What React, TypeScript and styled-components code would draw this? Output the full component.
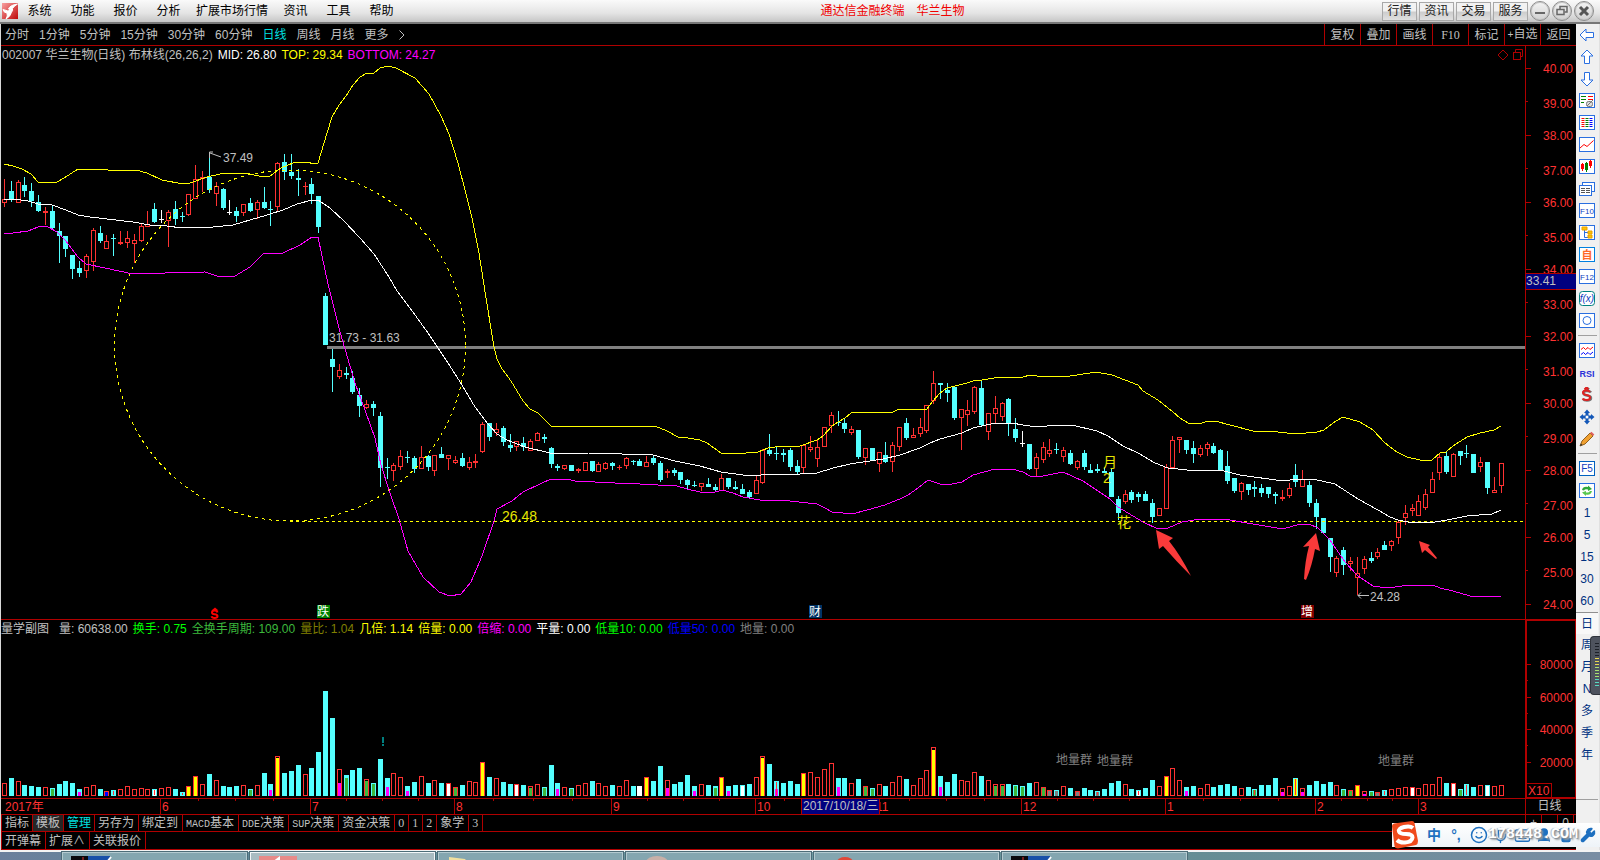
import React from 'react';
import styled, { createGlobalStyle, css } from 'styled-components';
import { Smile, Mic, Keyboard, UserRound, Shirt, Wrench } from 'lucide-react';

const RED_LINE = '#b00000';
const UP = '#ff3232';
const DOWN = '#54ffff';
const YELLOW = '#ffff00';
const MAGENTA = '#ff00ff';
const GREY = '#c0c0c0';

const GlobalStyle = createGlobalStyle`
  * { box-sizing: border-box; }
  html, body { margin: 0; padding: 0; background: #000; }
  body, button {
    font-family: "Liberation Sans", "Noto Sans CJK SC", sans-serif;
    font-size: 12px;
    line-height: 16px;
  }
  button { margin: 0; padding: 0; border: 0; background: none; color: inherit; white-space: nowrap; cursor: pointer; }
  svg { display: block; }
`;

/* ---------- data ---------- */

type Kind = 'u' | 'd' | 'w';

/* kind, high, body top, body bottom, low */
const CANDLE_DATA = `
u 179 199 203 207,d 181 191 200 202,u 180 182 203 203,d 177 185 191 197,d 183 191 201 207,d 195 202 211 212,
u 207 211 213 225,d 206 211 228 229,d 223 231 236 263,d 236 236 249 257,d 255 255 269 279,d 261 268 273 277,
u 254 256 271 278,u 228 230 262 271,d 226 233 241 243,u 235 241 249 249,d 234 238 239 256,u 231 242 244 245,
u 231 238 243 248,u 234 240 244 263,u 224 226 241 242,u 211 224 227 227,d 203 209 222 223,w 210 219 220 223,
u 210 212 221 247,d 201 209 219 225,d 212 216 217 222,u 194 194 215 216,u 165 179 199 199,u 171 177 179 192,
d 152 177 190 193,u 182 186 194 206,d 188 189 208 210,w 200 212 213 215,d 207 211 216 222,u 204 204 213 216,
d 198 203 211 212,u 200 202 210 219,d 187 202 208 209,d 201 209 210 226,u 162 163 207 211,d 154 162 172 180,
d 154 172 176 179,d 169 178 180 196,u 182 186 187 195,d 178 184 194 204,d 196 196 227 233,d 293 296 345 345,
d 349 359 367 392,u 364 370 377 379,d 367 373 375 379,d 371 378 392 394,d 388 395 406 417,u 400 404 408 409,
d 401 404 408 416,d 412 416 468 487,d 458 467 468 479,u 463 465 471 481,u 450 456 467 470,d 451 457 458 463,
d 456 458 469 473,u 446 457 469 469,d 455 456 467 471,u 455 455 471 476,d 447 454 458 458,u 455 455 459 470,
u 456 460 463 464,d 453 458 466 467,u 457 462 468 470,u 454 461 463 468,u 422 424 452 453,d 423 423 437 441,
u 423 429 433 436,d 426 428 442 446,d 434 445 448 452,u 441 441 447 451,d 437 443 447 451,u 439 441 451 451,
u 432 433 441 441,d 434 437 439 443,d 447 448 464 468,d 464 466 468 471,u 465 465 469 470,d 465 465 471 471,
u 468 469 471 473,u 462 462 471 471,d 461 461 471 472,u 462 464 472 472,u 462 463 469 470,d 462 463 466 470,
u 465 467 468 470,u 457 458 466 469,d 460 461 462 465,d 459 461 466 466,u 456 462 467 467,d 456 458 463 465,
d 461 463 480 482,u 469 471 473 478,d 468 470 473 476,d 472 472 480 484,d 479 480 485 489,d 481 485 486 487,
u 483 483 487 491,d 478 484 487 487,d 484 487 490 491,u 474 478 491 491,d 478 478 487 489,d 481 487 489 490,
d 484 489 494 494,d 490 492 497 498,u 475 480 494 494,u 449 450 483 484,d 434 450 454 456,d 446 453 454 460,
d 449 453 455 462,d 448 450 467 471,d 460 466 472 474,u 445 445 468 473,u 436 447 450 452,u 440 447 459 467,
u 427 427 447 447,u 412 415 426 433,d 411 422 423 426,d 418 423 429 433,u 426 429 433 435,d 430 430 457 459,
u 448 448 458 465,d 448 448 460 460,u 452 452 464 472,d 442 455 462 463,u 442 445 462 472,u 427 427 447 451,
d 418 423 438 440,u 428 435 438 438,u 418 427 434 437,u 405 405 431 433,u 371 383 401 404,d 383 383 385 399,
d 383 390 393 402,d 386 387 418 420,u 409 409 418 450,u 400 410 415 426,u 386 387 412 414,d 381 388 425 426,
u 413 413 432 440,u 396 408 414 423,u 402 403 417 421,d 398 399 423 436,d 418 429 438 442,w 431 443 444 447,
d 444 444 469 470,u 453 457 469 476,u 442 447 460 463,u 439 450 454 457,d 443 449 450 454,u 447 450 457 462,
d 450 453 464 465,u 460 461 468 470,d 450 453 467 470,d 464 470 473 473,d 464 469 471 473,d 467 471 473 473,
d 469 472 497 497,d 496 499 513 520,u 490 494 502 504,d 490 492 500 503,d 492 494 497 502,d 491 494 501 501,
d 499 503 517 523,u 508 508 516 516,u 464 467 509 509,u 436 440 468 468,u 437 437 440 453,d 440 440 450 454,
d 441 448 454 463,u 445 448 455 457,u 442 444 449 456,d 443 446 453 454,d 449 450 470 470,d 451 466 481 484,
d 478 478 491 493,u 482 483 492 500,d 484 484 490 495,d 481 487 489 497,d 484 488 493 497,d 487 487 494 498,
d 492 494 496 504,u 490 497 499 501,u 483 488 496 498,d 464 475 482 487,u 470 479 487 487,d 481 485 503 507,
d 499 503 517 529,d 518 518 533 533,d 538 538 557 572,u 556 558 573 577,d 547 550 565 575,u 557 561 564 571,
u 557 573 578 595,u 556 559 569 574,d 552 558 561 563,u 548 552 557 559,d 541 545 550 550,u 540 541 546 551,
u 520 522 538 544,u 505 513 518 525,u 504 508 511 516,u 495 501 516 516,u 489 494 508 510,u 472 479 493 493,
u 454 457 473 480,d 451 456 472 474,u 453 454 477 477,d 451 451 456 465,d 445 453 454 458,d 454 454 473 473,
u 457 462 467 472,d 462 462 488 494,u 477 490 493 493,u 463 463 486 493`;

/* kind, bar height, optional inner colour and its height, optional red core */
const VOLUME_DATA = `
u13 d18 u15 d11 d10 d9 u9 d8g7 d12 d15 d13 d7m4 u9 u11 d7 u5b4 d6r u7 u10 u7 u8 u7 d7w6r u8 u9 d7 d4r u10y9 u20y19
u12 d22 u16 d10 d9 d10 u11 d7g6 u11 d23 d12m6 u40y38 d23 d25 d31 u22 d28 d44 d105 d78 u27m13 d21g18 d26 d28 u17g15
d13g12 d37 d18m9 u23 u19 d10m5 d14 u20 d13 u16 d13 u13w12 u9g8 d11 u15 u14 u34y33 d19 u18 d14 d12 u12w11 d11 u10g8
u12 d9g8 d31 d13m7 u9 d8g7 u11 u13 d15 u13 u10 d11 u10 u16 d10 w10 u19y18 d15 d30 u16m8 d12 d14 d21 d10m5 u12 d11
d10g8 u19y18 d10m5 d11 d11w10 d12 u19 u40y38 d32 d15m7r d13 d15 d12 u23y22 u24 u19 u27 u33 d18m9 d18 u13 d17 u10g9
d8g7 u12 d10 u14 u20 d17 u11 u18 u26 u49y46 d20m9 d14 d22 u16 u15 u24 d20 u16 u12g10 u12g10 d12 d11g10 d10g9 d13
u14 u9g8 u6k5 d6k5 u10 d8 u5k4 d8 d6 d5k4r d7 d13 d15 u12 d7 d6w5r d8 d16 u10 u20y19 u28 u16 d9m5 d10 u8 u12 d9
d11 d12 d10 u8 d9 d7g6r d11 d11 d18 u8m4 u10 d18y17r u8m4 d11 d15 d12 d14 u11 d7g6 u6g5 u11y10 u5m2 d5g4 u4k3
d6r u7 u8 u9 u9w8 u8 u12 u12 u19 d13 u13w12 d7g6 d12r d9 u11 d11w10 u10 u11`;

const FILLS: Record<string, string> = {
  y: YELLOW, m: MAGENTA, g: '#3cb83c', w: '#ffffff', b: '#0000ff', k: '#808080',
};

const TOP_LINE =
  '4,164 13,166 22,169 31,174 38,182 57,182 64,178 78,169 105,169 108,170 136,170 147,173 162,180 183,184 190,183 207,177 220,174 245,173 259,176 270,176 281,168 293,163 309,162 312,164 318,163 324,143 332,117 339,105 346,96 353,85 360,77 367,73 374,73 380,68 388,66 396,68 415,78 429,94 441,116 449,134 458,163 465,190 472,218 479,253 486,298 494,347 497,359 502,369 511,381 523,401 530,409 538,413 551,426 655,426 667,431 678,437 688,438 700,440 707,443 721,453 746,453 758,452 768,448 782,446 800,446 817,440 823,436 832,426 838,422 845,418 851,413 863,412 893,412 899,409 915,409 920,410 927,409 932,402 940,393 947,388 955,386 967,383 973,381 982,380 1000,377 1023,377 1030,375 1037,376 1063,377 1077,375 1096,372 1112,375 1138,385 1143,391 1158,400 1173,412 1180,418 1188,423 1202,423 1208,421 1215,421 1230,425 1253,431 1278,432 1295,434 1317,432 1324,430 1333,423 1343,417 1360,422 1373,430 1385,443 1397,452 1407,457 1420,460 1432,460 1440,453 1446,452 1453,446 1467,437 1480,433 1494,430 1501,426';
const MID_LINE =
  '4,199 13,199 28,201 38,204 52,205 66,210 78,215 90,217 107,219 133,222 150,225 167,226 182,228 213,227 233,225 250,220 267,215 283,210 297,204 312,200 318,200 330,208 344,221 360,238 374,254 389,277 397,291 410,308 428,333 448,363 462,385 475,407 488,424 497,434 507,440 525,447 550,453 588,453 622,454 653,455 675,461 700,466 721,472 743,475 755,476 767,474 800,474 817,473 833,468 850,464 863,462 883,459 900,455 920,448 930,443 940,439 962,433 973,428 995,423 1012,423 1023,425 1030,426 1047,426 1050,425 1072,425 1097,431 1108,436 1123,446 1138,453 1155,463 1168,468 1197,471 1220,470 1240,475 1283,481 1297,479 1313,479 1335,484 1358,499 1378,510 1390,517 1398,520 1408,522 1435,522 1447,520 1467,516 1492,514 1501,510';
const BOTTOM_LINE =
  '4,233 13,233 28,231 38,227 40,226 48,227 57,232 66,241 78,257 86,264 105,268 133,274 165,273 205,272 217,276 235,276 245,270 250,267 263,254 283,253 300,245 312,237 318,237 328,284 340,332 355,383 365,410 375,438 381,465 390,493 399,519 408,551 423,577 439,592 450,596 461,594 471,582 482,556 494,521 497,509 512,501 523,492 542,483 551,479 567,479 575,481 615,483 640,484 658,485 677,486 687,489 700,492 712,493 722,490 733,493 743,497 760,500 790,501 817,504 825,508 832,512 843,513 852,514 867,510 885,505 892,502 900,499 908,495 918,488 928,480 940,484 952,484 962,482 973,475 995,469 1012,469 1023,472 1030,476 1043,476 1063,472 1083,481 1110,499 1118,507 1143,522 1158,529 1168,528 1182,522 1200,519 1230,520 1253,524 1283,529 1300,524 1309,524 1318,528 1330,540 1345,562 1358,576 1373,586 1380,587 1395,587 1410,585 1433,585 1440,588 1453,591 1470,596 1501,596';

const barX = (i: number) => Math.floor(4.36 + 6.834 * i);

const candles = CANDLE_DATA.trim().split(',').map((row, i) => {
  const [kind, ...nums] = row.trim().split(' ');
  const [high, top, bottom, low] = nums.map(Number);
  return { kind: kind as Kind, high, top, bottom, low, x: barX(i) };
});

const volumes = VOLUME_DATA.trim().split(/\s+/).map((token, i) => {
  const m = /^([udw])(\d+)(?:([ymgwbk])(\d+))?(r)?$/.exec(token)!;
  return { kind: m[1] as Kind, height: Number(m[2]), fill: m[3], fillHeight: Number(m[4] || 0), core: !!m[5], x: barX(i) };
});

/* ---------- frame ---------- */

const Page = styled.div`
  position: relative;
  display: flex;
  flex-direction: column;
  min-height: 100vh;
  overflow: hidden;
  background: #000;
`;

const MenuBar = styled.header`
  display: flex;
  align-items: center;
  height: 24px;
  padding: 0 6px 0 2px;
  border-bottom: 2px solid #777;
  background: linear-gradient(#fafafa, #e4e4e4 60%, #c6c6c6);
`;

const MenuItems = styled.nav`
  display: flex;
`;

const MenuItem = styled.button`
  min-width: 43px;
  padding: 0 6px;
  color: #000;
`;

const Title = styled.h1`
  display: flex;
  flex: 1;
  gap: 12px;
  justify-content: center;
  margin: 0;
  color: #f00000;
  font-size: 12px;
  font-weight: 400;
  white-space: nowrap;
`;

const TitleButtons = styled.div`
  display: flex;
  align-items: center;
  gap: 2px;
`;

const TitleButton = styled.button`
  width: 35px;
  height: 19px;
  border: 1px solid #a8a8a8;
  background: linear-gradient(#f2f2f2 45%, #cdcdcd 55%, #e0e0e0);
  color: #222;
`;

const WindowButton = styled.button`
  display: grid;
  place-items: center;
  width: 20px;
  height: 20px;
  border: 1px solid #8c8c8c;
  border-radius: 50%;
  background: linear-gradient(#f4f4f4, #d0d0d0);
  box-shadow: inset 0 0 0 1px #c4c4c4;
`;

const Body = styled.div`
  display: flex;
  border-bottom: 2px solid #f4f4f4;
`;

const Main = styled.main`
  flex: 1;
  min-width: 0;
  border-left: 1px solid #d8d8d8;
`;

const PeriodBar = styled.div`
  display: flex;
  justify-content: space-between;
  height: 22px;
  border-bottom: 1px solid ${RED_LINE};
  color: ${GREY};
`;

const Periods = styled.nav`
  display: flex;
  align-items: center;
  gap: 10px;
  padding-left: 4px;
`;

const Period = styled.button<{ $active?: boolean }>`
  color: ${(p) => (p.$active ? '#00e0e0' : GREY)};
`;

const Tools = styled.div`
  display: flex;
`;

const Tool = styled.button`
  width: 36px;
  border-left: 1px solid ${RED_LINE};
`;

const Mono = styled.span`
  font-family: "Liberation Mono", monospace;
  font-size: 10px;
`;

const Serif = styled.span`
  font-family: "Liberation Serif", serif;
`;

/* ---------- chart panes ---------- */

const Pane = styled.section`
  display: flex;
  border-bottom: 1px solid ${RED_LINE};
`;

const Plot = styled.div`
  flex: 1;
  min-width: 0;
`;

const Axis = styled.div<{ $framed?: boolean }>`
  width: 51px;
  border-left: 1px solid ${RED_LINE};
  ${(p) => p.$framed && css`
    box-shadow: inset 1px 0 ${RED_LINE}, inset -1px 0 ${RED_LINE}, inset 0 1px ${RED_LINE}, inset 0 -1px ${RED_LINE};
  `}
`;

const Legend = styled.div`
  display: flex;
  align-items: center;
  gap: 5px;
  height: 18px;
  padding: 0 1px;
  white-space: nowrap;
`;

const SubLegend = styled(Legend)`
  padding-left: 0;
`;

const LegendName = styled.span`
  margin-right: 5px;
  color: ${GREY};
`;

const Value = styled.span<{ $color: string }>`
  color: ${(p) => p.$color};
`;

const PaneIcons = styled.span`
  display: flex;
  gap: 3px;
  margin-left: auto;
`;

const Drawing = styled.svg`
  width: 100%;
  font-family: "Liberation Sans", "Noto Sans CJK SC", sans-serif;
  font-size: 12px;
`;

const AxisName = styled.div`
  width: 51px;
  padding-right: 3px;
  border-left: 1px solid ${RED_LINE};
  color: ${GREY};
  text-align: center;
  line-height: 15px;
`;

/* ---------- bottom tabs ---------- */

const TabRow = styled.div<{ $last?: boolean }>`
  display: flex;
  height: ${(p) => (p.$last ? 18 : 17)}px;
  border-bottom: 1px solid ${RED_LINE};
  border-left: 1px solid ${RED_LINE};
`;

const Tab = styled.button<{ $tight?: boolean; $pressed?: boolean; $active?: boolean }>`
  padding: ${(p) => (p.$tight ? '0 3px' : '0 4px 0 3px')};
  border-right: 1px solid ${RED_LINE};
  background: ${(p) => (p.$pressed ? '#262626' : 'none')};
  color: ${(p) => (p.$active ? '#00e0e0' : GREY)};
`;

const ZoomBox = styled.div`
  display: flex;
  width: 51px;
  margin-left: auto;
  border-left: 1px solid ${RED_LINE};
`;

const ZoomButton = styled.button`
  width: 16px;
  border-right: 1px solid ${RED_LINE};
  color: ${GREY};
`;

/* ---------- side bar ---------- */

const SideBar = styled.aside`
  display: flex;
  flex-direction: column;
  width: 24px;
  padding-right: 1px;
  background: #f0f0f0;
  border-right: 1px solid #e0e0e0;
`;

const SideButton = styled.button<{ $pressed?: boolean }>`
  display: grid;
  place-items: center;
  height: 22px;
  color: #003080;
  font-size: 12px;
  ${(p) => p.$pressed && css`
    border-top: 1px solid #909090;
    background: #f8f8f8;
  `}
`;

const SideRule = styled.hr`
  width: 19px;
  height: 8px;
  margin: 0 0 0 2px;
  border: 0;
  background: linear-gradient(#a0a0a0, #a0a0a0) 0 3px / 100% 1px no-repeat;
`;

const SideFoot = styled.div`
  margin-top: auto;
  height: 51px;
  border-top: 1px solid #a0a0a0;
`;

/* ---------- desktop overlays ---------- */

const Meter = styled.div`
  position: absolute;
  top: 636px;
  right: 0;
  width: 10px;
  height: 59px;
  padding: 6px 2px 0 4px;
  border: 1px solid #30343c;
  border-right: 0;
  border-radius: 4px 0 0 4px;
  background: #4e535e;
`;

const ImeBar = styled.div`
  position: absolute;
  top: 823px;
  right: 0;
  display: flex;
  align-items: center;
  gap: 6px;
  height: 24px;
  padding-right: 4px;
  background: linear-gradient(#fff, #eef3f8);
  color: #1e70c0;
`;

const ImeButton = styled.button`
  display: grid;
  place-items: center;
  width: 16px;
  height: 20px;
  font-size: 14px;
  font-weight: 700;
`;

const ImeLogo = styled.svg`
  margin-left: -2px;
`;

const Watermark = styled.span`
  position: absolute;
  right: 22px;
  top: 3px;
  color: #fff;
  font-family: "Liberation Mono", monospace;
  font-size: 15px;
  font-weight: 700;
  line-height: 18px;
  text-shadow: 1px 1px 1px #8a8f94, -1px 0 1px #b0b4b8, 2px 2px 2px #9aa0a4;
`;

const TaskBar = styled.footer`
  display: flex;
  flex: 1;
  gap: 3px;
  min-height: 8px;
  padding-left: 62px;
  background: linear-gradient(90deg, #6b7f9c, #5f8c98 20%, #6d9aa2 50%, #668d94 75%, #7a8ea4);
`;

const Task = styled.button<{ $active?: boolean }>`
  display: flex;
  width: 185px;
  min-width: 0;
  padding: 3px 8px 0;
  overflow: hidden;
  border: 1px solid ${(p) => (p.$active ? '#f2f6f8' : '#b4cad0')};
  border-bottom: 0;
  background: ${(p) => (p.$active ? '#a9bcc2' : '#84a6b0')};
  box-shadow: 0 0 0 1px #4c6c78;
`;

/* ---------- chart drawings ---------- */

function Candle({ c }: { c: (typeof candles)[number] }) {
  const color = c.kind === 'u' ? UP : c.kind === 'd' ? DOWN : '#ffffff';
  const h = Math.max(c.bottom - c.top, 1);
  const hollow = c.kind === 'u' && h > 2;
  return (
    <g fill={color}>
      {c.top > c.high && <rect x={c.x} y={c.high} width={1} height={c.top - c.high} />}
      {c.low > c.bottom && <rect x={c.x} y={c.bottom} width={1} height={c.low - c.bottom} />}
      {hollow ? (
        <rect x={c.x - 1.5} y={c.top + 0.5} width={4} height={h - 1} fill="none" stroke={color} />
      ) : (
        <rect x={c.x - 2} y={c.top} width={5} height={h} />
      )}
    </g>
  );
}

function VolumeBar({ v }: { v: (typeof volumes)[number] }) {
  const base = 796;
  const top = base - v.height;
  return (
    <g>
      {v.kind === 'u' ? (
        <rect x={v.x - 1.5} y={top + 0.5} width={4} height={v.height - 1} fill="none" stroke={UP} />
      ) : (
        <rect x={v.x - 2} y={top} width={5} height={v.height} fill={v.kind === 'w' ? '#fff' : DOWN} />
      )}
      {v.fill && <rect x={v.x - 1} y={base - v.fillHeight} width={3} height={v.fillHeight} fill={FILLS[v.fill]} />}
      {v.core && <rect x={v.x} y={top + 1} width={1} height={v.height - 2} fill={UP} />}
    </g>
  );
}

function Badge({ x, fill, children }: { x: number; fill: string; children: string }) {
  return (
    <g>
      <rect x={x} y={605} width={13} height={13} fill={fill} />
      <text x={x} y={616} fill="#fff">{children}</text>
    </g>
  );
}

function PricePlot() {
  return (
    <Drawing height={555} role="img" aria-label="华兰生物 日线">
      <g transform="translate(-1 -64)">
        <g shapeRendering="crispEdges">
          {candles.map((c) => <Candle key={c.x} c={c} />)}
          <rect x={327} y={346} width="100%" height={3} fill="#808080" />
          <line x1={290} y1={521.5} x2="100%" y2={521.5} stroke={YELLOW} strokeDasharray="3 3" />
          <g fill="none" strokeWidth={1}>
            <circle cx={290} cy={345.5} r={175.5} stroke={YELLOW} strokeDasharray="3 4" />
            <polyline points={TOP_LINE} stroke={YELLOW} />
            <polyline points={MID_LINE} stroke="#fff" />
            <polyline points={BOTTOM_LINE} stroke={MAGENTA} />
          </g>
        </g>
        <path d="M209.5 158 V152 H213 M210 153 L221 157" fill="none" stroke={GREY} />
        <path d="M1369 595.5 H1358 M1361 592.5 L1358 595.5 L1361 598.5" fill="none" stroke={GREY} />
        <g fill={GREY}>
          <text x={223} y={162}>37.49</text>
          <text x={329} y={342}>31.73 - 31.63</text>
          <text x={1370} y={601}>24.28</text>
        </g>
        <g fill="#e6e600" fontSize={14}>
          <text x={502} y={521}>26.48</text>
          <text x={1103} y={467}>月</text>
          <text x={1103} y={483}>2</text>
          <text x={1117} y={527}>花</text>
        </g>
        <g fill="#fa3a3a">
          <path d="M1156 530 L1173 538 L1169 541 Q1181 556 1191 576 Q1176 561 1163 546 L1159 549 Z" />
          <path d="M1316 533 L1320 551 L1315 549 Q1312 566 1306 580 L1304 579 Q1305 561 1309 546 L1303 547 Z" />
          <path d="M1419 541 L1430 545 L1428 547 L1437 558 L1436 559 L1425 550 L1422 553 Z" />
        </g>
        <Badge x={317} fill="#008000">跌</Badge>
        <Badge x={809} fill="#003366">财</Badge>
        <Badge x={1301} fill="#800000">增</Badge>
        <path d="M211.5 610.5 L215 607.5 L218.500 610.5 Z" fill="#f00" />
        <path d="M217.500 612.500 Q217 610.500 214.500 610.500 Q212 610.500 212 612.500 Q212 614 214.500 614.300 Q217.500 614.600 217.500 616.300 Q217.500 618 214.500 618 Q212 618 211.500 616.300" fill="none" stroke="#f00" strokeWidth={2} />
      </g>
    </Drawing>
  );
}

function VolumePlot() {
  return (
    <Drawing height={160} role="img" aria-label="量学副图">
      <g transform="translate(-1 -638)">
        <g shapeRendering="crispEdges">
          {volumes.map((v) => <VolumeBar key={v.x} v={v} />)}
          <path d="M383 737 V743 M383 744 V746" stroke="#008080" strokeWidth={2} />
        </g>
        <g fill="#808080">
          <text x={1056} y={764}>地量群</text>
          <text x={1097} y={765}>地量群</text>
          <text x={1378} y={765}>地量群</text>
        </g>
      </g>
    </Drawing>
  );
}

const prices = Array.from({ length: 17 }, (_, i) => 40 - i);

function PriceScale() {
  return (
    <Drawing height={573} fill={UP}>
      {prices.map((p, i) => {
        const y = 22 + Math.floor(33.5 * i);
        return (
          <g key={p}>
            <rect x={0} y={y} width={i % 2 ? 2 : 5} height={1} fill={RED_LINE} />
            <text x={47} y={y + (i % 2 ? 7 : 5)} textAnchor="end">{p.toFixed(2)}</text>
          </g>
        );
      })}
      <rect x={0} y={227} width={50} height={17} fill={RED_LINE} />
      <rect x={0} y={228} width={50} height={15} fill="#000080" />
      <text x={0} y={239} fill={GREY}>33.41</text>
    </Drawing>
  );
}

function VolumeScale() {
  return (
    <Drawing height={178} fill={UP}>
      {[80000, 60000, 40000, 20000].map((n, i) => {
        const y = 44 + Math.round(32.7 * i);
        return (
          <g key={n}>
            <rect x={0} y={y} width={5} height={1} fill={RED_LINE} />
            {i < 3 && <rect x={0} y={y + 16} width={2} height={1} fill={RED_LINE} />}
            <text x={47} y={y + 5} textAnchor="end">{n}</text>
          </g>
        );
      })}
      <rect x={0.5} y={163.500} width={25} height={14} fill="none" stroke={RED_LINE} />
      <text x={2} y={175}>X10</text>
    </Drawing>
  );
}

const months: [number, string][] = [
  [160, '6'], [310, '7'], [454, '8'], [611, '9'], [755, '10'], [874, '11'], [1021, '12'], [1165, '1'], [1315, '2'], [1418, '3'],
];
const weeks = [198, 235, 273, 346, 382, 418, 493, 533, 572, 647, 683, 719, 784, 909, 946, 984, 1057, 1093, 1129, 1203, 1240, 1278, 1341, 1367, 1392];

function TimeScale() {
  return (
    <Drawing height={15} fill={UP}>
      <text x={4} y={12}>2017年</text>
      {weeks.map((x) => <rect key={x} x={x - 1} y={0} width={1} height={2} fill={RED_LINE} />)}
      {months.map(([x, label]) => (
        <g key={x}>
          <rect x={x - 1} y={0} width={1} height={15} fill={RED_LINE} />
          <text x={x + 1} y={12}>{label}</text>
        </g>
      ))}
      <rect x={800} y={0} width={79} height={15} fill={RED_LINE} />
      <rect x={801} y={0} width={77} height={15} fill="#000080" />
      <text x={802} y={11} fill={GREY}>2017/10/18/三</text>
    </Drawing>
  );
}

/* ---------- icons ---------- */

const BLUE = '#2a6fe0';

function Framed({ stroke = BLUE, children }: { stroke?: string; children?: React.ReactNode }) {
  return (
    <svg width={16} height={16}>
      <rect x={0.5} y={0.5} width={15} height={14} fill="#fff" stroke={stroke} />
      {children}
    </svg>
  );
}

const ArrowIcon = ({ turn }: { turn: number }) => (
  <svg width={16} height={16}>
    <path transform={`rotate(${turn} 8 8)`} d="M1 8 L7 2 V5.500 H14.500 V10.500 H7 V14 Z" fill="#fff" stroke={BLUE} />
  </svg>
);

const FLabel = ({ text, stroke }: { text: string; stroke?: string }) => (
  <Framed stroke={stroke}>
    <text x={8} y={11} textAnchor="middle" fontSize={text.length > 2 ? 8 : 10} fill="#1040c0">{text}</text>
  </Framed>
);

const sideIcons: [string, React.ReactNode][] = [
  ['后退', <ArrowIcon turn={0} />],
  ['上翻', <ArrowIcon turn={90} />],
  ['下翻', <ArrowIcon turn={270} />],
  ['报价', (
    <Framed>
      <path d="M2 3.500 H7 M2 6.500 H7 M2 9.500 H5" stroke="#008000" />
      <path d="M9 3.500 H14 M9 6.500 H14" stroke="#f00" />
      <rect x={7.500} y={8.500} width={6} height={5} rx={2} fill="#ddd" stroke="#777" />
      <path d="M8 13 L14 7" stroke="#777" />
    </Framed>
  )],
  ['行情', (
    <Framed>
      <path d="M4 3 V13" stroke="#f00" strokeWidth={3} strokeDasharray="1 1" />
      <path d="M8 3 V13" stroke="#008000" strokeWidth={3} strokeDasharray="1 1" />
      <path d="M12 3 V13" stroke="#00f" strokeWidth={3} strokeDasharray="1 1" />
    </Framed>
  )],
  ['分时图', <Framed><path d="M1 11 L5 7.500 L8 9.500 L14.500 3.500" fill="none" stroke="#f00" /></Framed>],
  ['K线图', (
    <Framed>
      <path d="M3.500 4 V12 M11.500 1 V9" stroke="#f00" />
      <path d="M7.500 3 V13" stroke="#008000" />
      <path d="M2 5 H5 V10 H2 Z M10 2 H13 V7 H10 Z" fill="#f00" />
      <path d="M6 4 H9 V11 H6 Z" fill="#008000" />
    </Framed>
  )],
  ['多窗', (
    <svg width={16} height={16}>
      <rect x={3.500} y={1.500} width={12} height={9} fill="#fff" stroke={BLUE} />
      <rect x={0.500} y={4.500} width={12} height={10} fill="#fff" stroke={BLUE} />
      <path d="M2 7.500 H6 M7 7.500 H11 M2 9.500 H6 M7 9.500 H11 M2 11.500 H6 M7 11.500 H11" stroke="#555" />
    </svg>
  )],
  ['F10', <FLabel text="F10" />],
  ['结构', (
    <Framed>
      <path d="M5.500 4 V12.500 H9 M5.500 7.500 H9" fill="none" stroke={BLUE} />
      <path d="M3 2 H8 V5 H3 Z M9 6 H13 V9 H9 Z M9 10 H13 V13 H9 Z" fill="#ffc400" stroke="#e8a000" />
    </Framed>
  )],
  ['自选', (
    <Framed stroke="#0080e0">
      <text x={8} y={12} textAnchor="middle" fontSize={11} fontWeight={700} fill="#ff6a28">自</text>
    </Framed>
  )],
  ['F12', <FLabel text="F12" />],
  ['公式', (
    <svg width={16} height={16}>
      <rect x={0.500} y={0.500} width={15} height={14} rx={3} fill="#fff" stroke="#008080" />
      <text x={8} y={11} textAnchor="middle" fontSize={10} fontStyle="italic" fill="#1040c0">f(x)</text>
    </svg>
  )],
  ['圈', <Framed><circle cx={8} cy={7.500} r={4} fill="none" stroke={BLUE} /></Framed>],
];

const sideMarks: [string, React.ReactNode][] = [
  ['叠加', (
    <Framed>
      <path d="M2 6.500 L4.500 4.500 L6.500 6.500 L9 4.500 L11 6.500 L14 4" fill="none" stroke="#f00" />
      <path d="M2 11.500 L4.500 9.500 L6.500 11.500 L9 9.500 L11 11.500 L14 9" fill="none" stroke="#00f" />
    </Framed>
  )],
  ['RSI', <svg width={16} height={16}><text x={8} y={12} textAnchor="middle" fontSize={9} fontWeight={700} fill="#2a30d8">RSI</text></svg>],
  ['信号', (
    <svg width={16} height={16}>
      <path d="M12 5.500 Q11 4 8 4 Q4.500 4 4.500 6 Q4.500 8 8 8.500 Q12 9 12 11 Q12 13.500 8 13.500 Q5 13.500 4 12 M6 2.500 L8 1 L10 2.500" fill="none" stroke="#777" strokeWidth={2.500} />
      <path d="M11 5 Q10 3.500 7.500 3.500 Q4 3.500 4 5.500 Q4 7.500 7.500 8 Q11 8.500 11 10.500 Q11 13 7.500 13 Q4.500 13 3.500 11.500 M5.500 2.500 L7.500 0.500 L9.500 2.500" fill="none" stroke="#e02020" strokeWidth={2} />
    </svg>
  )],
  ['移动', (
    <svg width={16} height={16}>
      <path d="M8 0.500 L11 4 H9.500 V6.500 H12 V5 L15.500 8 L12 11 V9.500 H9.500 V12 H11 L8 15.500 L5 12 H6.500 V9.500 H4 V11 L0.500 8 L4 5 V6.500 H6.500 V4 H5 Z" fill="#1458b8" />
      <circle cx={8} cy={8} r={1.500} fill="#fff" />
    </svg>
  )],
  ['画笔', (
    <svg width={16} height={16}>
      <path d="M1 15 L3 10 L11 2 L14 5 L6 13 Z" fill="#f0a030" stroke="#906020" />
      <path d="M11 2 L12.500 0.700 L15.300 3.500 L14 5 Z" fill="#e06060" />
      <path d="M1 15 L2 12.500 L3.500 14 Z" fill="#333" />
    </svg>
  )],
];

const sideLabels = ['1', '5', '15', '30', '60', '日', '周', '月', 'N', '多', '季', '年'];

const taskArt: React.ReactNode[] = ['stock', 'red', 'folder', 'face', 'dot', 'stock'].map((kind, i) => (
  <svg key={i} width={42} height={8}>
    {kind === 'stock' && <><rect width={17} height={8} fill="#08080c" /><rect x={17} width={22} height={8} fill="#1850a8" /><path d="M12 1 V8" stroke="#e03030" /><path d="M36 6 L40 1" stroke="#fff" strokeWidth={2} /></>}
    {kind === 'red' && <><rect width={38} height={8} fill="#e88a88" /><path d="M16 5 L20 2 V8" fill="none" stroke="#fff" strokeWidth={2} /></>}
    {kind === 'folder' && <path d="M2 1 L18 3 L22 8 H2 Z" fill="#f0e0a0" />}
    {kind === 'face' && <ellipse cx={22} cy={6} rx={11} ry={6} fill="#c8b0a8" />}
    {kind === 'dot' && <ellipse cx={22} cy={6} rx={8} ry={5} fill="#e04838" />}
  </svg>
));

/* ---------- app ---------- */

export default function App() {
  return (
    <Page>
      <GlobalStyle />
      <MenuBar>
        <svg width={16} height={18} aria-hidden="true">
          <defs>
            <linearGradient id="logo" x1="0" y1="0" x2="1" y2="1">
              <stop offset="0" stopColor="#f8a0a0" />
              <stop offset="1" stopColor="#c00808" />
            </linearGradient>
          </defs>
          <rect y={1} width={16} height={16} fill="url(#logo)" />
          <path d="M15.500 2 Q8 3 6.500 7 Q8 8.500 10 8 Q6 10 1 7.500 Q2 11 5 11 Q6 14 4 17 Q9 14 9.500 10 Q11 9 10.500 6.500 Q12 4 15.500 2 Z" fill="#fff" stroke="#fff" />
        </svg>
        <MenuItems>
          {['系统', '功能', '报价', '分析', '扩展市场行情', '资讯', '工具', '帮助'].map((m) => (
            <MenuItem key={m}>{m}</MenuItem>
          ))}
        </MenuItems>
        <Title><span>通达信金融终端</span><span>华兰生物</span></Title>
        <TitleButtons>
          {['行情', '资讯', '交易', '服务'].map((t) => <TitleButton key={t}>{t}</TitleButton>)}
          <WindowButton aria-label="最小化">
            <svg width={12} height={12}><path d="M1 8 H11" stroke="#666" strokeWidth={2} /></svg>
          </WindowButton>
          <WindowButton aria-label="还原">
            <svg width={12} height={12} fill="none" stroke="#666" strokeWidth={1.500}>
              <path d="M4 4 V1.500 H11 V7 H8.500" /><rect x={1} y={4.500} width={7} height={5} />
            </svg>
          </WindowButton>
          <WindowButton aria-label="关闭">
            <svg width={12} height={12}><path d="M2 2 L10 10 M10 2 L2 10" stroke="#555" strokeWidth={3} /></svg>
          </WindowButton>
        </TitleButtons>
      </MenuBar>

      <Body>
        <Main>
          <PeriodBar>
            <Periods>
              {['分时', '1分钟', '5分钟', '15分钟', '30分钟', '60分钟', '日线', '周线', '月线', '更多'].map((p) => (
                <Period key={p} $active={p === '日线'}>{p}</Period>
              ))}
              <svg width={6} height={10} aria-hidden="true"><path d="M0.500 0.500 L5 5 L0.500 9.500" fill="none" stroke={GREY} /></svg>
            </Periods>
            <Tools>
              <Tool>复权</Tool>
              <Tool>叠加</Tool>
              <Tool>画线</Tool>
              <Tool><Serif>F10</Serif></Tool>
              <Tool>标记</Tool>
              <Tool><Mono>+</Mono>自选</Tool>
              <Tool>返回</Tool>
            </Tools>
          </PeriodBar>

          <Pane>
            <Plot>
              <Legend>
                <Value $color={GREY}>002007 华兰生物(日线) 布林线(26,26,2)</Value>
                <Value $color="#fff">MID: 26.80</Value>
                <Value $color={YELLOW}>TOP: 29.34</Value>
                <Value $color={MAGENTA}>BOTTOM: 24.27</Value>
                <PaneIcons>
                  <svg width={12} height={12}><path d="M6 1 L11 6 L6 11 L1 6 Z" fill="none" stroke={RED_LINE} /></svg>
                  <svg width={12} height={12} fill="none" stroke={RED_LINE}>
                    <path d="M3.500 3 V0.500 H10.500 V7.500 H8" /><rect x={1.500} y={3.500} width={7} height={7} />
                  </svg>
                </PaneIcons>
              </Legend>
              <PricePlot />
            </Plot>
            <Axis><PriceScale /></Axis>
          </Pane>

          <Pane>
            <Plot>
              <SubLegend>
                <LegendName>量学副图</LegendName>
                <Value $color={GREY}>量: 60638.00</Value>
                <Value $color="#00ff00">换手: 0.75</Value>
                <Value $color="#3cb83c">全换手周期: 109.00</Value>
                <Value $color="#808000">量比: 1.04</Value>
                <Value $color={YELLOW}>几倍: 1.14</Value>
                <Value $color={YELLOW}>倍量: 0.00</Value>
                <Value $color={MAGENTA}>倍缩: 0.00</Value>
                <Value $color="#fff">平量: 0.00</Value>
                <Value $color="#00ff00">低量10: 0.00</Value>
                <Value $color="#0000ff">低量50: 0.00</Value>
                <Value $color="#808080">地量: 0.00</Value>
              </SubLegend>
              <VolumePlot />
            </Plot>
            <Axis $framed><VolumeScale /></Axis>
          </Pane>

          <Pane>
            <Plot><TimeScale /></Plot>
            <AxisName>日线</AxisName>
          </Pane>

          <TabRow>
            <Tab $tight>指标</Tab>
            <Tab $tight $pressed>模板</Tab>
            <Tab $tight $active>管理</Tab>
            <Tab>另存为</Tab>
            <Tab>绑定到</Tab>
            <Tab><Mono>MACD</Mono>基本</Tab>
            <Tab><Mono>DDE</Mono>决策</Tab>
            <Tab><Mono>SUP</Mono>决策</Tab>
            <Tab>资金决策</Tab>
            <Tab><Serif>0</Serif></Tab>
            <Tab><Serif>1</Serif></Tab>
            <Tab><Serif>2</Serif></Tab>
            <Tab>象学</Tab>
            <Tab><Serif>3</Serif></Tab>
            <ZoomBox>
              <ZoomButton>+</ZoomButton>
              <ZoomButton>-</ZoomButton>
              <ZoomButton>0</ZoomButton>
            </ZoomBox>
          </TabRow>
          <TabRow $last>
            <Tab>开弹幕</Tab>
            <Tab>扩展∧</Tab>
            <Tab>关联报价</Tab>
          </TabRow>
        </Main>

        <SideBar>
          {sideIcons.map(([name, icon]) => <SideButton key={name} aria-label={name}>{icon}</SideButton>)}
          <SideRule />
          {sideMarks.map(([name, icon]) => <SideButton key={name} aria-label={name}>{icon}</SideButton>)}
          <SideRule />
          <SideButton aria-label="F5"><FLabel text="F5" stroke="#0060c0" /></SideButton>
          <SideButton aria-label="刷新">
            <Framed>
              <path d="M3 7 Q4 3 9 4 L9 2.500 L13 6 L9 8 V6.500 Q6 5.500 5 7.500 Z" fill="#30a838" />
              <path d="M13 8 Q12 12.500 7 11.500 V13 L3 9.500 L7 8 V9.500 Q10 10 11 8 Z" fill="#58c850" />
            </Framed>
          </SideButton>
          {sideLabels.map((l) => <SideButton key={l} $pressed={l === '日'}>{l}</SideButton>)}
          <SideFoot />
        </SideBar>
      </Body>

      <TaskBar>
        {taskArt.map((art, i) => (
          <Task key={i} $active={i === 1} aria-label={`任务 ${i + 1}`}>{art}</Task>
        ))}
      </TaskBar>

      <Meter>
        <svg width={4} height={46} aria-hidden="true">
          {Array.from({ length: 15 }, (_, i) => (
            <rect key={i} y={i * 3} width={4} height={1} fill={i < 5 ? '#1c2028' : i < 8 ? '#e8d850' : i < 12 ? '#a8e070' : '#58d8c0'} />
          ))}
        </svg>
      </Meter>

      <ImeBar>
        <ImeLogo width={30} height={30} viewBox="0 0 30 30" aria-hidden="true">
          <path d="M2 6 Q2 4 4 3.500 L22 1 Q24 1 24.500 3 L28 21 Q28 24 26 25 L8 28.500 Q5 28.500 4.500 26 Z" fill="#f04a1c" />
          <path d="M23 8 Q20 5.500 14 7 Q8 8.500 9 11.500 Q10 14 16 14 Q22.500 14 22.500 17.500 Q22 22 15 22.500 Q10 23 7 20" fill="none" stroke="#fff" strokeWidth={4} />
        </ImeLogo>
        <ImeButton>中</ImeButton>
        <ImeButton>°,</ImeButton>
        <ImeButton aria-label="表情"><Smile size={18} strokeWidth={2} /></ImeButton>
        <ImeButton aria-label="语音"><Mic size={17} strokeWidth={2} /></ImeButton>
        <ImeButton aria-label="键盘"><Keyboard size={17} strokeWidth={2} /></ImeButton>
        <ImeButton aria-label="账户"><UserRound size={16} fill="#1e70c0" /></ImeButton>
        <ImeButton aria-label="皮肤"><Shirt size={16} fill="#1e70c0" /></ImeButton>
        <ImeButton aria-label="工具箱"><Wrench size={16} fill="#1e70c0" /></ImeButton>
        <Watermark>178448.COM</Watermark>
      </ImeBar>
    </Page>
  );
}
